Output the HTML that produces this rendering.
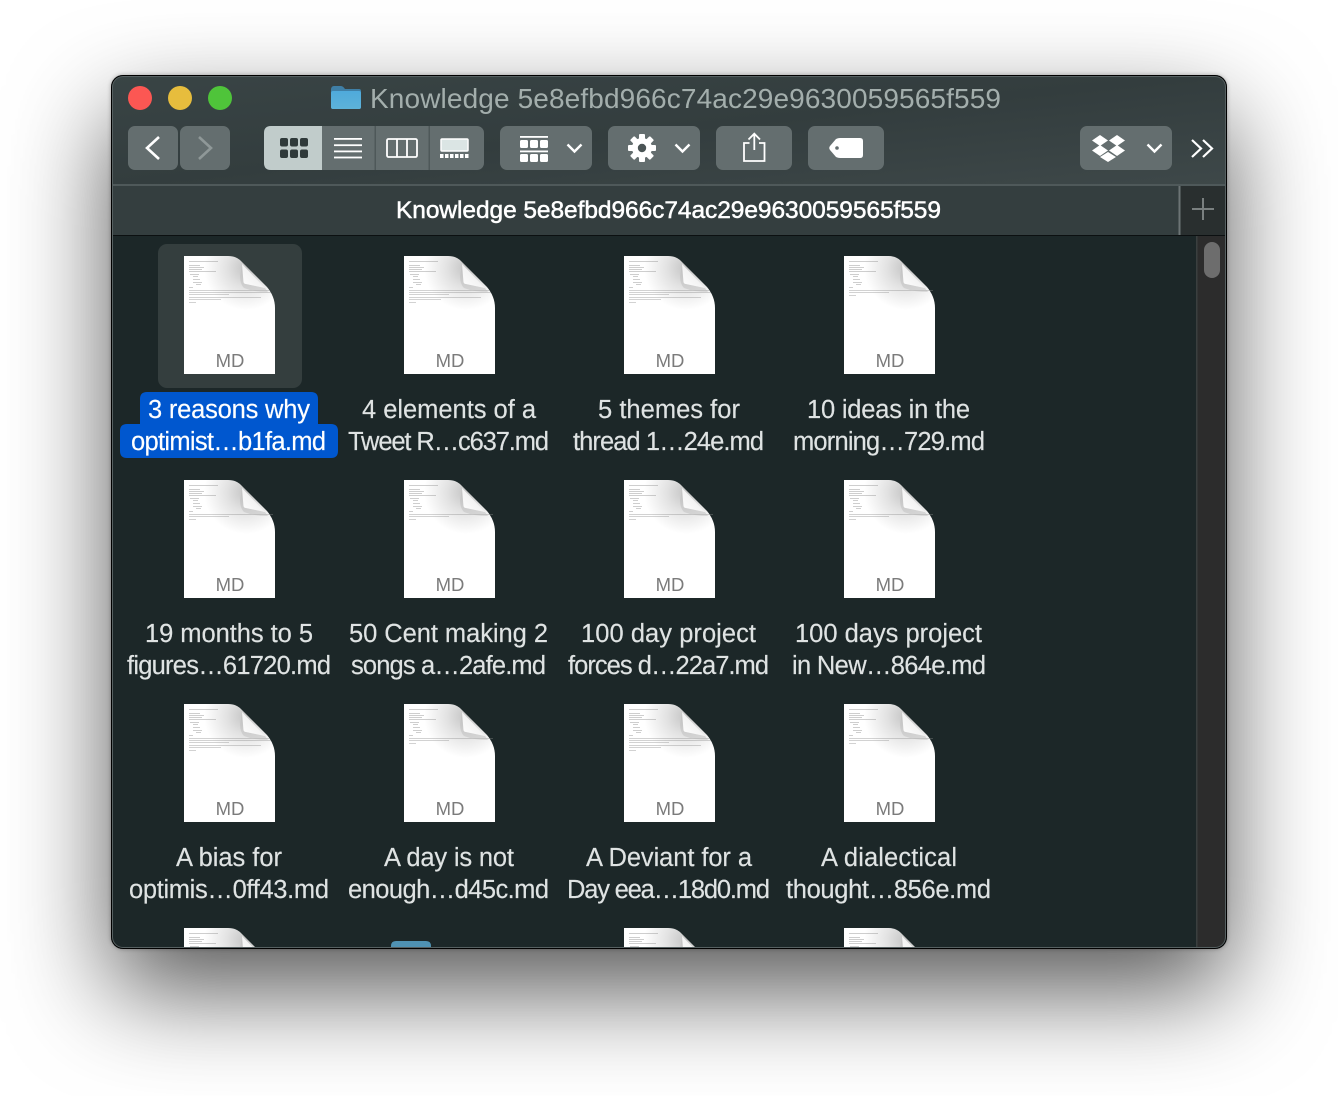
<!DOCTYPE html>
<html><head><meta charset="utf-8"><title>Knowledge</title>
<style>
html,body{margin:0;padding:0;background:#fff;width:1338px;height:1096px;overflow:hidden}
#win{position:absolute;left:111px;top:75px;width:1116px;height:874px;border-radius:12px;overflow:hidden;box-shadow:0 42px 100px rgba(0,0,0,.66),0 0 4px rgba(0,0,0,.3);background:#1c2728}
#win svg{position:absolute;left:-111px;top:-75px}
#edge{position:absolute;inset:0;border-radius:12px;box-shadow:inset 0 0 0 1px #000,inset 0 0 0 2px #566061;pointer-events:none}
text{font-family:"Liberation Sans",sans-serif}
.l{font-size:25.5px;fill:#dfe3e3;stroke:#dfe3e3;stroke-width:.15}
.m{font-size:18.5px;fill:#7b7b7b;text-anchor:middle}
</style></head><body>
<div id="win">
<svg width="1338" height="1096" viewBox="0 0 1338 1096" xmlns="http://www.w3.org/2000/svg">
<defs>
<linearGradient id="tb" x1="0" y1="0" x2="1" y2="1"><stop offset="0" stop-color="#394445"/><stop offset=".5" stop-color="#333d3e"/><stop offset="1" stop-color="#3e4849"/></linearGradient>
<radialGradient id="sh" gradientUnits="userSpaceOnUse" cx="62" cy="12" r="42"><stop offset="0" stop-color="#c4c4c4"/><stop offset=".45" stop-color="#e2e2e2"/><stop offset="1" stop-color="#fff"/></radialGradient>
<linearGradient id="fo" x1="0" y1="1" x2="1" y2="0"><stop offset="0" stop-color="#fff"/><stop offset="1" stop-color="#e6e6e6"/></linearGradient>
<linearGradient id="fd" x1="0" y1="0" x2="0" y2="1"><stop offset="0" stop-color="#4faadb"/><stop offset="1" stop-color="#5db2d9"/></linearGradient>
<g id="doc">
<path d="M0 0H44C50 0 54 2 57 5L83 31C88 37 91 44 91 52V118H0Z" fill="url(#sh)"/>
<g fill="#8c8c8c" opacity=".6">
<rect x="5" y="5" width="29" height=".7"/><rect x="5" y="9" width="11" height=".7"/><rect x="5" y="11" width="15" height=".7"/><rect x="5" y="13" width="13" height=".7"/><rect x="5" y="15" width="27" height=".7"/>
<rect x="6" y="18" width="9" height=".7"/><rect x="9" y="20" width="5" height=".7"/><rect x="9" y="23" width="7" height=".7"/><rect x="9" y="26" width="9" height=".7"/><rect x="12" y="28" width="5" height=".7"/>
<rect x="5" y="31" width="4" height=".7"/>
</g>
</g>
<g id="fold">
<path d="M58 9L59.500 26Q60 28 62 28L81 32L84 36Q70 36 60 32Q56 28 56 20Z" fill="#bbb" opacity=".45"/>
<path d="M58 8L59.500 26Q60 28 62 28L81 32Z" fill="url(#fo)"/>
</g>
<g id="t1" fill="#8c8c8c" opacity=".55"><rect x="5" y="34" width="80" height=".7"/><rect x="5" y="36" width="82" height=".7"/><rect x="5" y="38" width="40" height=".7"/><rect x="5" y="41" width="72" height=".7"/><rect x="5" y="43" width="32" height=".7"/><rect x="5" y="46" width="7" height=".7"/></g>
<g id="t2" fill="#8c8c8c" opacity=".55"><rect x="5" y="34" width="84" height=".7"/><rect x="5" y="36" width="40" height=".7"/><rect x="5" y="39" width="7" height=".7"/></g>
<path id="chev" d="M-7-3.500L0 3.500L7-3.500" fill="none" stroke="#fff" stroke-width="2.400"/>
</defs>

<!-- toolbar -->
<rect x="111" y="75" width="1116" height="110" fill="url(#tb)"/>
<rect x="111" y="184" width="1116" height="2" fill="#4f595a"/>
<rect x="111" y="186" width="1116" height="49" fill="#343e3f"/>
<rect x="1180" y="186" width="47" height="49" fill="#292f2f"/>
<rect x="1178.500" y="186" width="2" height="49" fill="#6c7475"/>
<rect x="111" y="235" width="1116" height="1.500" fill="#0c1011"/>
<path d="M1203 198V220M1192 209H1214" stroke="#7a8080" stroke-width="2" fill="none"/>

<circle cx="140" cy="98" r="12" fill="#fc5753"/><circle cx="180" cy="98" r="12" fill="#e7bd3d"/><circle cx="220" cy="98" r="12" fill="#4fc43a"/>

<!-- title -->
<path d="M331 90Q331 86 334 86H341Q343 86 345 89H359Q361 89 361 91V107Q361 109 359 109H333Q331 109 331 107Z" fill="#3f7fa6"/>
<path d="M331 93Q331 91 333 91H359Q361 91 361 93V107Q361 109 359 109H333Q331 109 331 107Z" fill="url(#fd)"/>
<text x="370" y="108" font-size="28" fill="#a3aeac" textLength="631">Knowledge 5e8efbd966c74ac29e9630059565f559</text>
<text x="396" y="218" font-size="24.500" fill="#fff" textLength="545" stroke="#fff" stroke-width=".5">Knowledge 5e8efbd966c74ac29e9630059565f559</text>

<!-- buttons -->
<g fill="#646e6f">
<rect x="128" y="126" width="50" height="44" rx="7"/><rect x="180" y="126" width="50" height="44" rx="7"/>
<rect x="264" y="126" width="220" height="44" rx="7"/>
<rect x="500" y="126" width="92" height="44" rx="7"/><rect x="608" y="126" width="92" height="44" rx="7"/>
<rect x="716" y="126" width="76" height="44" rx="7"/><rect x="808" y="126" width="76" height="44" rx="7"/>
<rect x="1080" y="126" width="92" height="44" rx="7"/>
</g>
<path d="M159 137L147 148L159 159" fill="none" stroke="#fff" stroke-width="2.600"/>
<path d="M199 137L211 148L199 159" fill="none" stroke="#8f9898" stroke-width="2.600"/>
<path d="M322 126H271Q264 126 264 133V163Q264 170 271 170H322Z" fill="#c1cccb"/>
<rect x="374.500" y="126" width="1.500" height="44" fill="#4e5859"/><rect x="428.500" y="126" width="1.500" height="44" fill="#4e5859"/>
<g fill="#2f393a">
<rect x="280" y="138" width="8" height="8.500" rx="2"/><rect x="290" y="138" width="8" height="8.500" rx="2"/><rect x="300" y="138" width="8" height="8.500" rx="2"/>
<rect x="280" y="149.500" width="8" height="8.500" rx="2"/><rect x="290" y="149.500" width="8" height="8.500" rx="2"/><rect x="300" y="149.500" width="8" height="8.500" rx="2"/>
</g>
<g fill="#fff"><rect x="334" y="138" width="28" height="1.800"/><rect x="334" y="144.300" width="28" height="1.800"/><rect x="334" y="150.500" width="28" height="1.800"/><rect x="334" y="156.600" width="28" height="1.800"/></g>
<rect x="387" y="139" width="30" height="18" rx="1.500" fill="none" stroke="#fff" stroke-width="1.800"/>
<path d="M397 139V157M407 139V157" stroke="#fff" stroke-width="1.800"/>
<rect x="441" y="139" width="27" height="12" rx="1" fill="#dbe5e4" stroke="#fff" stroke-width="1.500"/>
<g fill="#fff"><rect x="440" y="154" width="3.500" height="4"/><rect x="445" y="154" width="3.500" height="4"/><rect x="450" y="154" width="3.500" height="4"/><rect x="455" y="154" width="3.500" height="4"/><rect x="460" y="154" width="3.500" height="4"/><rect x="465" y="154" width="3.500" height="4"/></g>
<!-- group -->
<g fill="#fff"><rect x="520" y="136" width="28" height="1.800"/>
<rect x="520" y="140" width="8" height="8" rx="1.500"/><rect x="530" y="140" width="8" height="8" rx="1.500"/><rect x="540" y="140" width="8" height="8" rx="1.500"/>
<rect x="520" y="154" width="8" height="8" rx="1.500"/><rect x="530" y="154" width="8" height="8" rx="1.500"/><rect x="540" y="154" width="8" height="8" rx="1.500"/>
<rect x="520" y="150.500" width="28" height="1.800"/></g>
<use href="#chev" x="574.500" y="148"/>
<!-- gear -->
<g transform="translate(642 148)">
<circle r="10" fill="#fff"/>
<g fill="#fff"><rect x="-3" y="-14" width="6" height="28" rx="1"/><rect x="-3" y="-14" width="6" height="28" rx="1" transform="rotate(45)"/><rect x="-3" y="-14" width="6" height="28" rx="1" transform="rotate(90)"/><rect x="-3" y="-14" width="6" height="28" rx="1" transform="rotate(135)"/></g>
<circle r="4.200" fill="#4a5455"/>
</g>
<use href="#chev" x="682.500" y="148"/>
<!-- share -->
<path d="M749.500 143H744V161H764.500V143H759" fill="none" stroke="#fff" stroke-width="1.800"/>
<path d="M754.300 150V134M748.500 139.500L754.300 133.700L760 139.500" fill="none" stroke="#fff" stroke-width="1.800"/>
<!-- tag -->
<path d="M840 138H860Q863 138 863 141V155Q863 158 860 158H840Q838 158 836 157L830 150Q828.500 148 830 146L836 139Q838 138 840 138Z" fill="#fff"/>
<circle cx="837" cy="148" r="1.800" fill="#646e6f"/>
<!-- dropbox -->
<g fill="#fff">
<path d="M1100 135L1108 140.500L1100 146L1092 140.500Z"/><path d="M1117 135L1125 140.500L1117 146L1109 140.500Z"/>
<path d="M1100 145L1108 150.500L1100 156L1092 150.500Z"/><path d="M1117 145L1125 150.500L1117 156L1109 150.500Z"/>
<path d="M1108 152L1116 157L1108 162L1100 157Z"/>
</g>
<use href="#chev" x="1154.500" y="148"/>
<path d="M1192 140L1201 148.500L1192 157M1203 140L1212 148.500L1203 157" fill="none" stroke="#fff" stroke-width="2.200"/>

<!-- content -->
<rect x="111" y="236" width="1085" height="713" fill="#1c2728"/>
<rect x="1196" y="236" width="31" height="713" fill="#2c2c2c"/>
<rect x="1196" y="236" width="1.500" height="713" fill="#3a3f3f"/>
<rect x="1204" y="242" width="16" height="36" rx="8" fill="#6d6d6d"/>

<rect x="158" y="244" width="144" height="144" rx="9" fill="#343e3e"/>
<path d="M147 392H311Q318 392 318 399V424H331Q338 424 338 431V451Q338 458 331 458H127Q120 458 120 451V431Q120 424 127 424H140V399Q140 392 147 392Z" fill="#0057cf"/>

<!-- docs -->
<g transform="translate(184 256)"><use href="#doc"/><use href="#t1"/><use href="#fold"/></g>
<g transform="translate(404 256)"><use href="#doc"/><use href="#t1"/><use href="#fold"/></g>
<g transform="translate(624 256)"><use href="#doc"/><use href="#t1"/><use href="#fold"/></g>
<g transform="translate(844 256)"><use href="#doc"/><use href="#t2"/><use href="#fold"/></g>
<g transform="translate(184 480)"><use href="#doc"/><use href="#t2"/><use href="#fold"/></g>
<g transform="translate(404 480)"><use href="#doc"/><use href="#t2"/><use href="#fold"/></g>
<g transform="translate(624 480)"><use href="#doc"/><use href="#t2"/><use href="#fold"/></g>
<g transform="translate(844 480)"><use href="#doc"/><use href="#t2"/><use href="#fold"/></g>
<g transform="translate(184 704)"><use href="#doc"/><use href="#t1"/><use href="#fold"/></g>
<g transform="translate(404 704)"><use href="#doc"/><use href="#t2"/><use href="#fold"/></g>
<g transform="translate(624 704)"><use href="#doc"/><use href="#t1"/><use href="#fold"/></g>
<g transform="translate(844 704)"><use href="#doc"/><use href="#t2"/><use href="#fold"/></g>
<g transform="translate(184 928)"><use href="#doc"/><use href="#fold"/></g>
<path d="M391 949V946Q391 941 396 941H426Q431 941 431 946V949Z" fill="#4f92b3"/>
<g transform="translate(624 928)"><use href="#doc"/><use href="#fold"/></g>
<g transform="translate(844 928)"><use href="#doc"/><use href="#fold"/></g>

<text class="m" x="230" y="367">MD</text><text class="m" x="450" y="367">MD</text><text class="m" x="670" y="367">MD</text><text class="m" x="890" y="367">MD</text>
<text class="m" x="230" y="591">MD</text><text class="m" x="450" y="591">MD</text><text class="m" x="670" y="591">MD</text><text class="m" x="890" y="591">MD</text>
<text class="m" x="230" y="815">MD</text><text class="m" x="450" y="815">MD</text><text class="m" x="670" y="815">MD</text><text class="m" x="890" y="815">MD</text>

<!-- labels -->
<text class="l" style="fill:#fff;stroke:#fff" x="148" y="418" textLength="162">3 reasons why</text>
<text class="l" style="fill:#fff;stroke:#fff" x="131" y="450" textLength="195">optimist…b1fa.md</text>
<text class="l" x="362" y="418" textLength="174">4 elements of a</text>
<text class="l" x="348" y="450" textLength="201">Tweet R…c637.md</text>
<text class="l" x="598" y="418" textLength="142">5 themes for</text>
<text class="l" x="573" y="450" textLength="191">thread 1…24e.md</text>
<text class="l" x="807" y="418" textLength="163">10 ideas in the</text>
<text class="l" x="793" y="450" textLength="192">morning…729.md</text>

<text class="l" x="145" y="642" textLength="168">19 months to 5</text>
<text class="l" x="127" y="674" textLength="204">figures…61720.md</text>
<text class="l" x="349" y="642" textLength="199">50 Cent making 2</text>
<text class="l" x="351" y="674" textLength="195">songs a…2afe.md</text>
<text class="l" x="581" y="642" textLength="175">100 day project</text>
<text class="l" x="568" y="674" textLength="201">forces d…22a7.md</text>
<text class="l" x="795" y="642" textLength="187">100 days project</text>
<text class="l" x="792" y="674" textLength="194">in New…864e.md</text>

<text class="l" x="176" y="866" textLength="106">A bias for</text>
<text class="l" x="129" y="898" textLength="200">optimis…0ff43.md</text>
<text class="l" x="384" y="866" textLength="130">A day is not</text>
<text class="l" x="348" y="898" textLength="201">enough…d45c.md</text>
<text class="l" x="586" y="866" textLength="166">A Deviant for a</text>
<text class="l" x="567" y="898" textLength="203">Day eea…18d0.md</text>
<text class="l" x="821" y="866" textLength="136">A dialectical</text>
<text class="l" x="786" y="898" textLength="205">thought…856e.md</text>
</svg>
<div id="edge"></div>
</div>
</body></html>
